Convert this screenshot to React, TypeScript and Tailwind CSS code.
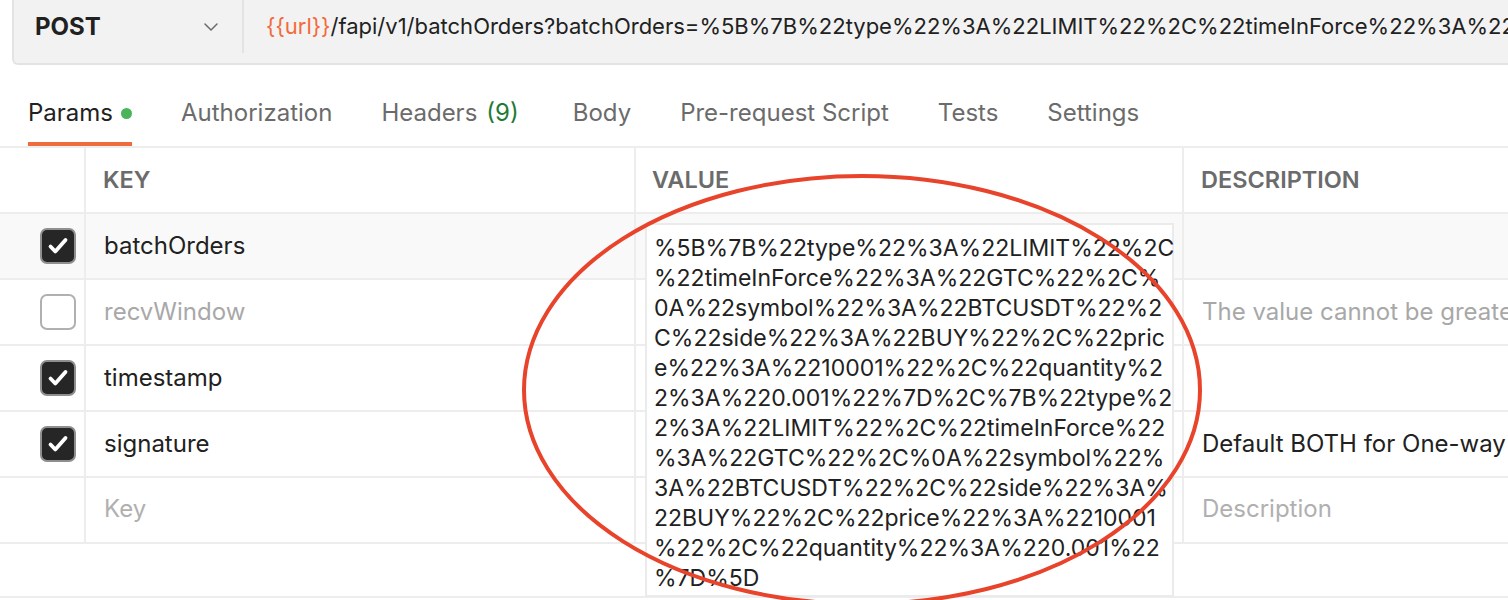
import { ChevronDown } from "lucide-react";

const valueLines = [
  "%5B%7B%22type%22%3A%22LIMIT%22%2C",
  "%22timeInForce%22%3A%22GTC%22%2C%",
  "0A%22symbol%22%3A%22BTCUSDT%22%2",
  "C%22side%22%3A%22BUY%22%2C%22pric",
  "e%22%3A%2210001%22%2C%22quantity%2",
  "2%3A%220.001%22%7D%2C%7B%22type%2",
  "2%3A%22LIMIT%22%2C%22timeInForce%22",
  "%3A%22GTC%22%2C%0A%22symbol%22%",
  "3A%22BTCUSDT%22%2C%22side%22%3A%",
  "22BUY%22%2C%22price%22%3A%2210001",
  "%22%2C%22quantity%22%3A%220.001%22",
  "%7D%5D",
];

interface Param {
  key: string;
  checked: boolean;
  description?: string;
  muted?: boolean;
}

const params: Param[] = [
  { key: "batchOrders", checked: true },
  { key: "recvWindow", checked: false, description: "The value cannot be greater than 60000", muted: true },
  { key: "timestamp", checked: true },
  { key: "signature", checked: true, description: "Default BOTH for One-way Mode ; LONG or SHORT for Hedge Mode" },
];

function Checkbox({ checked }: { checked: boolean }) {
  if (!checked) {
    return <div className="w-[36px] h-[36px] rounded-[7px] border-2 border-[#b0b0b0] bg-white" />;
  }
  return (
    <div className="w-[36px] h-[36px] rounded-[7px] border-2 border-[#8f8f8f] bg-[#262626] flex items-center justify-center">
      <svg width="24" height="24" viewBox="0 0 24 24" fill="none" stroke="white" strokeWidth="3.8" strokeLinecap="round" strokeLinejoin="round">
        <path d="M4.5 12.5l4.8 5L19.5 6" />
      </svg>
    </div>
  );
}

const tabs = [
  { label: "Params", active: true, dot: true },
  { label: "Authorization" },
  { label: "Headers", count: "(9)" },
  { label: "Body" },
  { label: "Pre-request Script" },
  { label: "Tests" },
  { label: "Settings" },
];

export default function App() {
  return (
    <div className="relative w-[1508px] h-[600px] overflow-hidden bg-white text-[#212121]" style={{ fontFamily: "Inter, 'Noto Sans', sans-serif" }}>
      {/* request bar */}
      <div className="ml-[12px] h-[65px] pb-[10px] flex bg-[#f2f2f2] border-l-2 border-b-2 border-[#e3e3e3] rounded-bl-[6px]">
        <div className="w-[230px] shrink-0 flex items-center justify-between pl-[21px] pr-[19px] border-r-2 border-[#e3e3e3]">
          <span className="text-[24px] font-bold">POST</span>
          <ChevronDown size={24} strokeWidth={1.5} className="text-[#6b6b6b]" />
        </div>
        <div className="flex-1 min-w-0 flex items-center pl-[22px] overflow-hidden whitespace-nowrap text-[22px]">
          <span className="text-[#f26b3a]">{"{{url}}"}</span>
          <span>/fapi/v1/batchOrders?batchOrders=%5B%7B%22type%22%3A%22LIMIT%22%2C%22timeInForce%22%3A%22GTC%22%2C%0A%22symbol</span>
        </div>
      </div>

      {/* tabs */}
      <div className="pt-[33px] pl-[28px] flex border-b-2 border-[#ededed] text-[24px]">
        {tabs.map((t) => (
          <div
            key={t.label}
            className={
              "flex items-center leading-[30px] pb-[14px] border-b-4 mr-[49px] " +
              (t.active ? "border-[#ef6c3e] text-[#212121]" : "border-transparent text-[#6b6b6b]")
            }
          >
            <span>{t.label}</span>
            {t.dot && <span className="ml-[8px] w-[11px] h-[11px] rounded-full bg-[#49b45c]" />}
            {t.count && <span className="ml-[9px] mr-[5px] text-[#1f7a37]">{t.count}</span>}
          </div>
        ))}
      </div>

      {/* table */}
      <div className="text-[24px]">
        <div className="grid grid-cols-[86px_550px_548px_1fr] h-[66px] border-b-2 border-[#ededed] font-semibold text-[23.5px] text-[#6b6b6b]">
          <div className="border-r-2 border-[#ededed]" />
          <div className="border-r-2 border-[#ededed] flex items-center pl-[17px]">KEY</div>
          <div className="border-r-2 border-[#ededed] flex items-center pl-[16px]">VALUE</div>
          <div className="flex items-center pl-[17px] whitespace-nowrap">DESCRIPTION</div>
        </div>

        {params.map((p, i) => (
          <div
            key={p.key}
            className={"grid grid-cols-[86px_550px_548px_1fr] h-[66px] border-b-2 border-[#ededed] " + (i === 0 ? "bg-[#f9f9f9]" : "bg-white")}
          >
            <div className="border-r-2 border-[#ededed] flex items-center justify-end pr-[8px]">
              <Checkbox checked={p.checked} />
            </div>
            <div className={"border-r-2 border-[#ededed] flex items-center pl-[18px] " + (p.checked ? "text-[#212121]" : "text-[#a8a8a8]")}>
              {p.key}
            </div>
            <div className="relative border-r-2 border-[#ededed]">
              {i === 0 && (
                <div className="absolute z-10 left-[9px] top-[9px] w-[529px] h-[374px] bg-white border-2 border-[#ebebeb] pt-[8px] pl-[7px] leading-[30px] text-[23px] whitespace-nowrap">
                  {valueLines.map((l, j) => (
                    <div key={j}>{l}</div>
                  ))}
                </div>
              )}
            </div>
            <div className={"flex items-center pl-[18px] whitespace-nowrap overflow-hidden " + (p.muted ? "text-[#a8a8a8]" : "text-[#212121]")}>
              {p.description}
            </div>
          </div>
        ))}

        <div className="grid grid-cols-[86px_550px_548px_1fr] h-[66px] border-b-2 border-[#ededed] text-[#b0b0b0]">
          <div className="border-r-2 border-[#ededed]" />
          <div className="border-r-2 border-[#ededed] flex items-center pl-[18px] pb-[3px]">Key</div>
          <div className="border-r-2 border-[#ededed]" />
          <div className="flex items-center pl-[18px] pb-[3px]">Description</div>
        </div>
        <div className="h-[54px] border-b-2 border-[#ededed]" />
      </div>

      {/* annotation */}
      <svg className="absolute left-0 top-0 z-20 pointer-events-none" width="1508" height="600">
        <ellipse cx="862" cy="390" rx="338" ry="214" fill="none" stroke="#e8432b" strokeWidth="4" />
      </svg>
    </div>
  );
}
